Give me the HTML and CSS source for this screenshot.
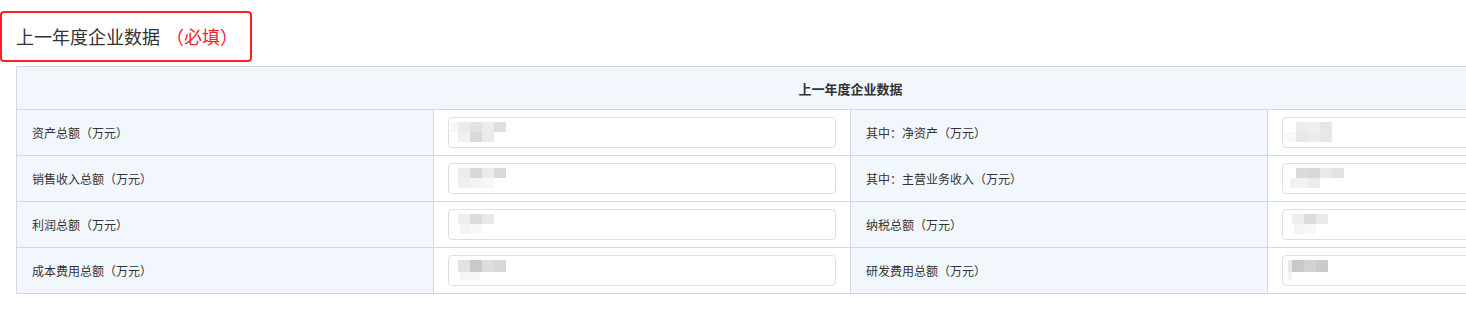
FILE: index.html
```html
<!DOCTYPE html>
<html lang="zh-CN">
<head>
    <meta charset="UTF-8">
    <title>上一年度企业数据</title>
    <link rel="stylesheet" href="styles.css">
</head>
<body>
    <div class="page">
        <div class="section-title">上一年度企业数据<span class="required">（必填）</span></div>

        <table class="data-table">
            <colgroup>
                <col><col><col><col>
            </colgroup>
            <thead>
                <tr>
                    <th colspan="4">上一年度企业数据</th>
                </tr>
            </thead>
            <tbody>
                <tr>
                    <td class="label">资产总额（万元）</td>
                    <td class="field"><div class="input"><span class="blur b1"></span></div></td>
                    <td class="label">其中：净资产（万元）</td>
                    <td class="field"><div class="input"><span class="blur b2"></span></div></td>
                </tr>
                <tr>
                    <td class="label">销售收入总额（万元）</td>
                    <td class="field"><div class="input"><span class="blur b3"></span></div></td>
                    <td class="label">其中：主营业务收入（万元）</td>
                    <td class="field"><div class="input"><span class="blur b4"></span></div></td>
                </tr>
                <tr>
                    <td class="label">利润总额（万元）</td>
                    <td class="field"><div class="input"><span class="blur b5"></span></div></td>
                    <td class="label">纳税总额（万元）</td>
                    <td class="field"><div class="input"><span class="blur b5"></span></div></td>
                </tr>
                <tr>
                    <td class="label">成本费用总额（万元）</td>
                    <td class="field"><div class="input"><span class="blur b6"></span></div></td>
                    <td class="label">研发费用总额（万元）</td>
                    <td class="field"><div class="input"><span class="blur b7"></span></div></td>
                </tr>
            </tbody>
        </table>
    </div>
</body>
</html>
```

FILE: styles.css
```css
* {
    box-sizing: border-box;
}

body {
    margin: 0;
    font-family: "Noto Sans CJK SC", "Liberation Sans", sans-serif;
    color: #333333;
    background: #ffffff;
    overflow: hidden;
}

.page {
    width: 1466px;
    height: 327px;
    overflow: hidden;
    padding-top: 11px;
}

.section-title {
    width: 252px;
    height: 51px;
    margin-left: 0;
    padding-left: 14px;
    border: 2px solid #ff2020;
    border-radius: 4px;
    font-size: 18px;
    line-height: 47px;
    color: #333333;
}

.required {
    margin-left: 6px;
    color: #f5222d;
}

.data-table {
    margin: 4px 0 0 16px;
    width: 1669px;
    table-layout: fixed;
    border-collapse: collapse;
    font-size: 12px;
}

.data-table col {
    width: 417px;
}

.data-table th,
.data-table td {
    border: 1px solid #d3d8e2;
}

.data-table th {
    height: 43px;
    background: #f2f7fe;
    font-size: 13px;
    font-weight: bold;
    text-align: center;
    color: #333333;
}

.data-table td {
    height: 46px;
}

.label {
    background: #f2f7fe;
    padding: 0 0 0 15px;
    color: #333333;
}

.field {
    background: #ffffff;
    padding: 0 14px 0 14px;
}

.input {
    height: 31px;
    width: 388px;
    border: 1px solid #dcdfe6;
    border-radius: 4px;
    background: #ffffff;
    padding: 4px 0 0 1px;
}

.blur {
    display: block;
    width: 56px;
    height: 20px;
}

.b1 {
    background:
        linear-gradient(90deg, #f7f7f7 0 8px, #ebebeb 8px 20px, #e2e2e4 20px 32px, #ececec 32px 44px, #dfdfe0 44px 56px) top / 100% 10px no-repeat,
        linear-gradient(90deg, #ffffff 0 8px, #f0f0f0 8px 20px, #dadadc 20px 32px, #ebebeb 32px 44px, #ffffff 44px 56px) bottom / 100% 10px no-repeat;
}

.b2 {
    background:
        linear-gradient(90deg, #ffffff 0 12px, #ededed 12px 24px, #efefef 24px 36px, #e6e6e6 36px 48px, #ffffff 48px) top / 100% 10px no-repeat,
        linear-gradient(90deg, #f9f9f9 0 12px, #e8e8e8 12px 24px, #ececec 24px 36px, #e7e7e7 36px 48px, #ffffff 48px) bottom / 100% 10px no-repeat;
}

.b3 {
    background:
        linear-gradient(90deg, #ffffff 0 8px, #ececec 8px 20px, #d8d8d9 20px 32px, #ebebeb 32px 44px, #dadadb 44px 56px) top / 100% 10px no-repeat,
        linear-gradient(90deg, #ffffff 0 8px, #efefef 8px 20px, #f3f3f3 20px 32px, #f7f7f7 32px 44px, #ffffff 44px) bottom / 100% 10px no-repeat;
}

.b4 {
    width: 64px;
    background:
        linear-gradient(90deg, #ffffff 0 12px, #dadadb 12px 24px, #d8d8d8 24px 36px, #e9e9eb 36px 48px, #e3e3e3 48px 60px, #ffffff 60px) top / 100% 10px no-repeat,
        linear-gradient(90deg, #ffffff 0 6px, #f2f2f2 6px 24px, #ececec 24px 36px, #ffffff 36px) bottom / 100% 10px no-repeat;
}

.b5 {
    background:
        linear-gradient(90deg, #ffffff 0 8px, #eeeeee 8px 20px, #dddddf 20px 32px, #e9e9e9 32px 44px, #ffffff 44px) top / 100% 10px no-repeat,
        linear-gradient(90deg, #ffffff 0 10px, #f4f4f4 10px 20px, #f8f8f8 20px 32px, #ffffff 32px) bottom / 100% 10px no-repeat;
}

.b6 {
    background:
        linear-gradient(90deg, #ffffff 0 8px, #e2e2e2 8px 20px, #c9c9ca 20px 32px, #dddddd 32px 44px, #d6d7d8 44px 56px) top / 100% 12px no-repeat,
        linear-gradient(90deg, #ffffff 0 10px, #f6f6f6 10px 30px, #ffffff 30px) bottom / 100% 8px no-repeat;
}

.b7 {
    background:
        linear-gradient(90deg, #ffffff 0 4px, #e8e8e8 4px 8px, #c8c9cb 8px 20px, #d3d2d3 20px 32px, #c9cbcd 32px 44px, #ffffff 44px) top / 100% 12px no-repeat,
        linear-gradient(90deg, #ffffff 0 4px, #f2f2f2 4px 8px, #ffffff 8px) bottom / 100% 8px no-repeat;
}
```
